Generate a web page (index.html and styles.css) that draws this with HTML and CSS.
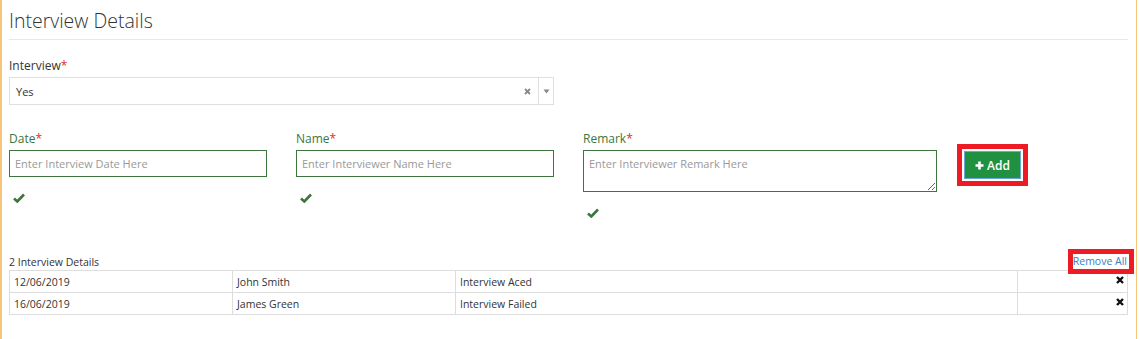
FILE: index.html
```html
<!DOCTYPE html>
<html>
<head>
<meta charset="utf-8">
<link rel="stylesheet" href="styles.css">
</head>
<body>
<div class="page">
  <h1 class="title">Interview Details</h1>
  <div class="rule"></div>

  <div class="field-top">
    <label class="lbl">Interview<span class="req">*</span></label>
    <div class="select">
      <span class="sel-val">Yes</span>
      <span class="sel-clear">
        <svg width="7" height="7" viewBox="0 0 7 7"><path d="M1 1 L6 6 M6 1 L1 6" stroke="#888" stroke-width="1.8"/></svg>
      </span>
      <span class="sel-arrow">
        <svg width="7" height="5" viewBox="0 0 7 5"><path d="M0.5 0.5 L6.5 0.5 L3.5 4.5 Z" fill="#888"/></svg>
      </span>
    </div>
  </div>

  <div class="row">
    <div class="col col-date">
      <label class="lbl ok">Date<span class="req">*</span></label>
      <input class="inp" placeholder="Enter Interview Date Here">
      <span class="check"><svg width="12" height="10" viewBox="0 0 12 10"><path d="M1 5.5 L4.3 8.5 L11 1.5" fill="none" stroke="#3c763d" stroke-width="2.6"/></svg></span>
    </div>
    <div class="col col-name">
      <label class="lbl ok">Name<span class="req">*</span></label>
      <input class="inp" placeholder="Enter Interviewer Name Here">
      <span class="check"><svg width="12" height="10" viewBox="0 0 12 10"><path d="M1 5.5 L4.3 8.5 L11 1.5" fill="none" stroke="#3c763d" stroke-width="2.6"/></svg></span>
    </div>
    <div class="col col-remark">
      <label class="lbl ok">Remark<span class="req">*</span></label>
      <textarea class="inp area" placeholder="Enter Interviewer Remark Here"></textarea>
      <span class="check"><svg width="12" height="10" viewBox="0 0 12 10"><path d="M1 5.5 L4.3 8.5 L11 1.5" fill="none" stroke="#3c763d" stroke-width="2.6"/></svg></span>
    </div>
    <div class="col col-add">
      <div class="hl hl-add">
        <button class="btn-add"><svg width="9" height="9" viewBox="0 0 9 9"><path d="M4.5 0.5 V8.5 M0.5 4.5 H8.5" stroke="#fff" stroke-width="2.6"/></svg>Add</button>
      </div>
    </div>
  </div>

  <div class="list">
    <div class="list-head">
      <span class="count">2 Interview Details</span>
      <span class="remove-all">Remove All</span>
      <span class="hl hl-remove"></span>
    </div>
    <table class="tbl">
      <tr>
        <td class="c1">12/06/2019</td>
        <td class="c2">John Smith</td>
        <td class="c3">Interview Aced</td>
        <td class="c4"><svg width="8" height="8" viewBox="0 0 8 8"><path d="M1 1 L7 7 M7 1 L1 7" stroke="#111" stroke-width="2.4"/></svg></td>
      </tr>
      <tr>
        <td class="c1">16/06/2019</td>
        <td class="c2">James Green</td>
        <td class="c3">Interview Failed</td>
        <td class="c4"><svg width="8" height="8" viewBox="0 0 8 8"><path d="M1 1 L7 7 M7 1 L1 7" stroke="#111" stroke-width="2.4"/></svg></td>
      </tr>
    </table>
  </div>
</div>
</body>
</html>
```

FILE: styles.css
```css
html, body {
  margin: 0;
  padding: 0;
  background: #fff;
}
body {
  font-family: "Open Sans", "Liberation Sans", sans-serif;
  color: #333;
}
.page {
  width: 1137px;
  height: 339px;
  border-left: 2px solid #f8c67a;
  border-right: 1px solid #f8c67a;
  padding-left: 7px;
  box-sizing: border-box;
}
.title {
  margin: 0;
  padding-top: 7px;
  font-size: 19.5px;
  font-weight: 300;
  line-height: 28px;
  color: #333;
  height: 32px;
}
.rule {
  width: 1119px;
  height: 1px;
  background: #e8e8e8;
}
.field-top {
  padding-top: 18px;
  display: flex;
  flex-direction: column;
}
.lbl {
  font-size: 12px;
  line-height: 16px;
  height: 19px;
  color: #333;
}
.lbl.ok { color: #3c763d; }
.req { color: #e02b27; }
.select {
  width: 545px;
  height: 28px;
  box-sizing: border-box;
  border: 1px solid #e0e0e0;
  display: flex;
  align-items: center;
  font-size: 11px;
}
.sel-val {
  flex: 1;
  padding-left: 6px;
}
.sel-clear {
  display: flex;
  padding-right: 7px;
}
.sel-arrow {
  display: flex;
  align-items: center;
  justify-content: center;
  width: 14px;
  height: 26px;
  border-left: 1px solid #e0e0e0;
}
.row {
  display: flex;
  margin-top: 26px;
  height: 122px;
}
.col {
  display: flex;
  flex-direction: column;
}
.col-date { width: 258px; margin-right: 29px; }
.col-name { width: 258px; margin-right: 29px; }
.col-remark { width: 354px; margin-right: 20px; }
.inp {
  font-family: "Open Sans", "Liberation Sans", sans-serif;
  font-size: 11px;
  height: 27px;
  box-sizing: border-box;
  border: 1px solid #3c763d;
  padding: 0 5px;
  margin: 0;
  outline: none;
  color: #333;
}
.inp::placeholder { color: #999; }
.area {
  height: 42px;
  resize: vertical;
  padding: 5px 5px;
  line-height: 16px;
}
.check {
  display: flex;
  padding-left: 4px;
  padding-top: 16px;
}
.hl {
  border: 5px solid #ed1c24;
  box-sizing: border-box;
}
.hl-add {
  width: 71px;
  height: 42px;
  padding: 2px;
  margin-top: 13px;
}
.btn-add {
  width: 57px;
  height: 28px;
  background: #1f9140;
  border: 1px solid #6aa6d6;
  color: #fff;
  font-family: "Open Sans", "Liberation Sans", sans-serif;
  font-size: 12px;
  font-weight: 600;
  display: flex;
  align-items: center;
  justify-content: center;
  gap: 3px;
  padding: 0;
  margin: 0;
}
.list {
  width: 1119px;
}
.list-head {
  position: relative;
  display: flex;
  justify-content: space-between;
  align-items: flex-end;
  font-size: 10.5px;
  height: 17px;
  line-height: 14px;
}
.count {
  padding-bottom: 1px;
}
.remove-all {
  color: #3b7dc4;
  padding-right: 1px;
  padding-bottom: 2px;
}
.hl-remove {
  position: absolute;
  right: -6px;
  top: -4px;
  width: 66px;
  height: 25px;
}
.tbl {
  border-collapse: collapse;
  width: 1119px;
  font-size: 10.5px;
  color: #333;
}
.tbl td {
  border: 1px solid #ddd;
  height: 22px;
  padding: 0 4px;
  box-sizing: border-box;
}
.c1 { width: 223px; }
.c2 { width: 223px; }
.c3 { width: 562px; }
.tbl td.c4 {
  vertical-align: top;
  padding: 5px 3px 0 0;
}
.c4 svg {
  display: block;
  margin-left: auto;
}
```
